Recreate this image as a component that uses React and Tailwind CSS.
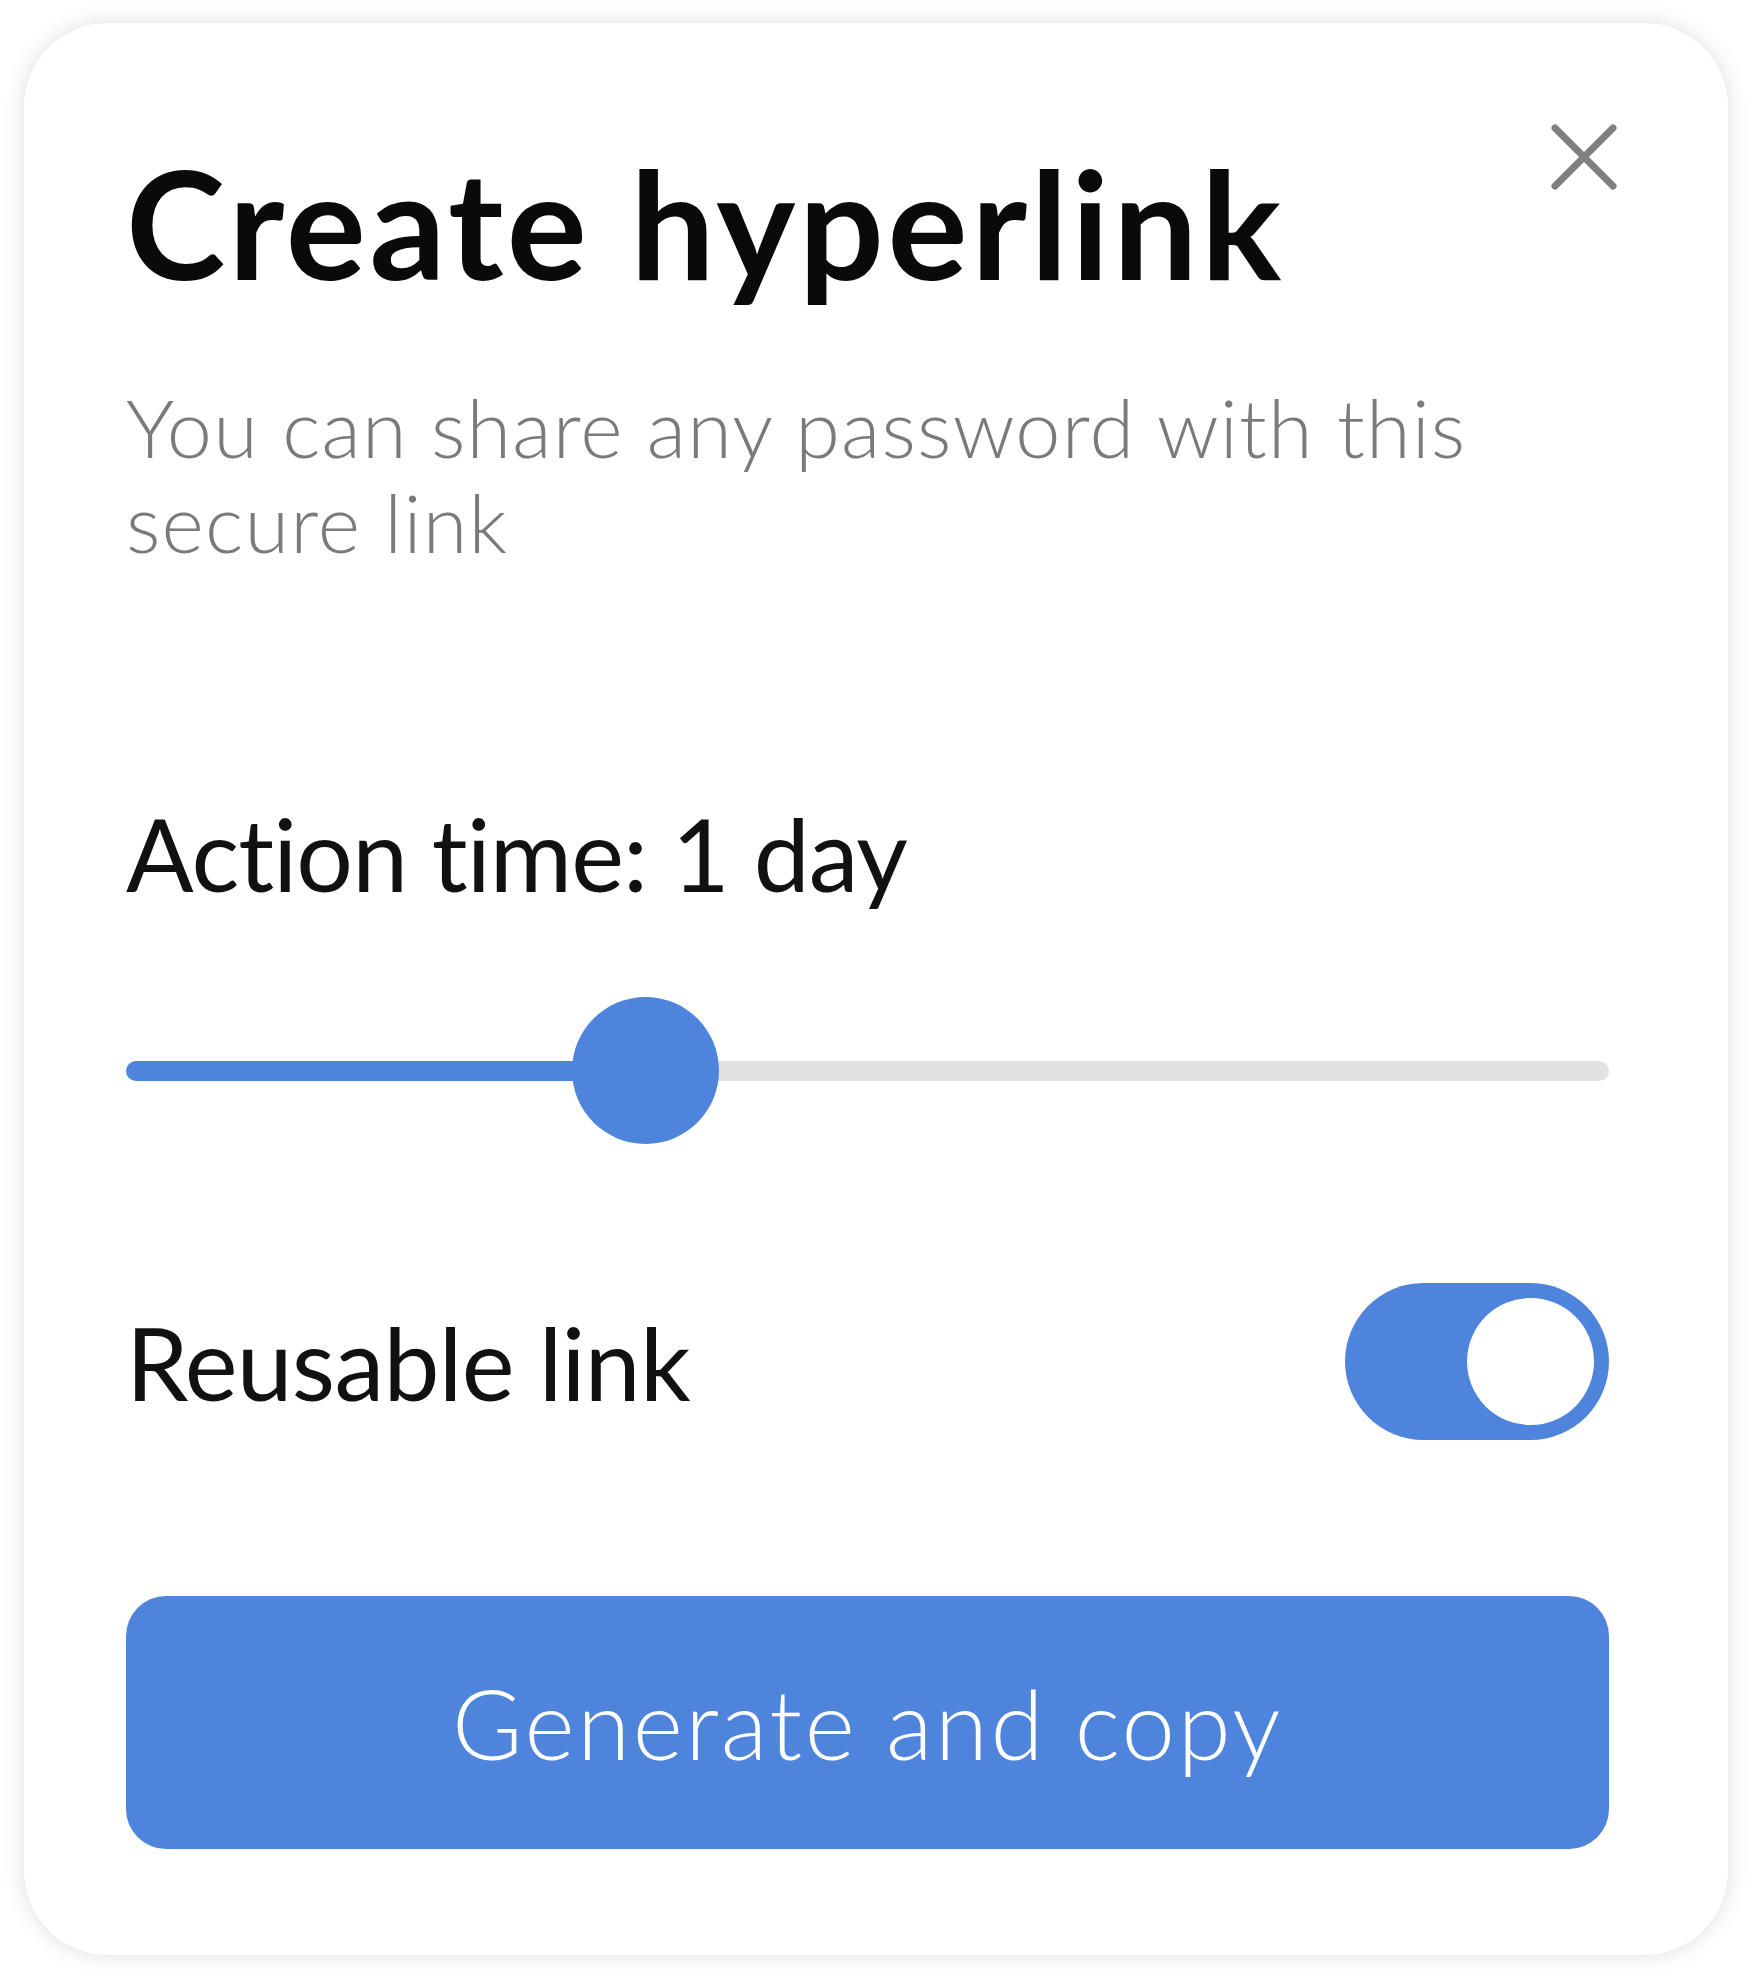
export default function App() {
  return (
    <div className="w-[1753px] h-[1979px] bg-white pt-[23px] pl-[24px] [font-variant-ligatures:none]" style={{ fontFamily: "Lato, 'Noto Sans', sans-serif" }}>
      <div className="relative w-[1704px] h-[1932px] rounded-[84px] bg-white shadow-[0_0_22px_rgba(0,0,0,0.13)] pl-[102px] pr-[119px] pt-[124px] flex flex-col">
        {/* Close */}
        <button className="absolute left-[1526px] top-[100px] w-[68px] h-[68px]">
          <svg width="68" height="68" viewBox="0 0 68 68" fill="none" stroke="#808080" strokeWidth="7" strokeLinecap="round">
            <path d="M5 5L63 63M63 5L5 63" />
          </svg>
        </button>

        <h1 className="text-[150px] leading-none font-bold text-[#0a0a0a] tracking-[3.5px]">Create hyperlink</h1>

        <p className="mt-[82px] text-[81px] leading-[95px] font-light text-[#7a7a7a] tracking-[1.2px] w-[1420px]">
          You can share any password with this secure link
        </p>

        <div className="mt-[234px] text-[100px] leading-none text-[#111] tracking-[-0.9px]">Action time: 1 day</div>

        {/* Slider */}
        <div className="relative mt-[94px] h-[147px] flex items-center">
          <div className="flex w-full h-[20px] rounded-full overflow-hidden">
            <div className="w-[519px] bg-[#4f84dc]" />
            <div className="flex-1 bg-[#e2e2e2]" />
          </div>
          <div className="absolute left-[446px] top-0 w-[147px] h-[147px] rounded-full bg-[#4f84dc]" />
        </div>

        {/* Reusable */}
        <div className="mt-[139px] flex items-center justify-between h-[157px]">
          <span className="text-[100px] leading-none text-[#111] tracking-[-0.7px]">Reusable link</span>
          <div className="w-[264px] h-[157px] rounded-full bg-[#4f84dc] flex items-center justify-end pr-[15px]">
            <div className="w-[127px] h-[127px] rounded-full bg-white" />
          </div>
        </div>

        <button className="mt-[156px] h-[253px] w-full rounded-[40px] bg-[#4f84dc] text-white text-[96px] font-light leading-none tracking-[2.6px] flex items-center justify-center">
          Generate and copy
        </button>
      </div>
    </div>
  );
}
